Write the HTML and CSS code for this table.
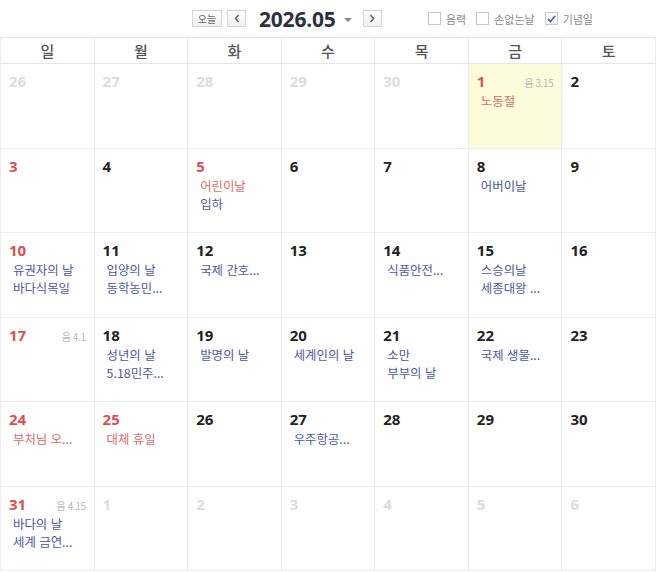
FILE: index.html
```html
<!DOCTYPE html>
<html lang="ko">
<head>
<meta charset="utf-8">
<title>2026.05</title>
<link rel="stylesheet" href="styles.css">
</head>
<body>
<div class="toolbar">
  <div class="nav">
    <span class="btn btn-today">오늘</span>
    <span class="btn btn-arrow"><svg width="6" height="9" viewBox="0 0 6 9"><path d="M4.5 1 L1.5 4.5 L4.5 8" fill="none" stroke="#666" stroke-width="1.6"/></svg></span>
    <span class="title">2026.05</span>
    <span class="caret"></span>
    <span class="btn btn-arrow btn-next"><svg width="6" height="9" viewBox="0 0 6 9"><path d="M1.5 1 L4.5 4.5 L1.5 8" fill="none" stroke="#666" stroke-width="1.6"/></svg></span>
  </div>
  <div class="opts">
    <label class="opt"><span class="box"></span>음력</label>
    <label class="opt"><span class="box"></span>손없는날</label>
    <label class="opt"><span class="box checked"><svg width="9" height="8" viewBox="0 0 9 8"><path d="M1 4 L3.5 6.5 L8 1" fill="none" stroke="#4a63b0" stroke-width="1.8"/></svg></span>기념일</label>
  </div>
</div>

<div class="cal">
  <div class="dow">일</div><div class="dow">월</div><div class="dow">화</div><div class="dow">수</div><div class="dow">목</div><div class="dow">금</div><div class="dow">토</div>

  <div class="cell"><div class="num other">26</div></div>
  <div class="cell"><div class="num other">27</div></div>
  <div class="cell"><div class="num other">28</div></div>
  <div class="cell"><div class="num other">29</div></div>
  <div class="cell"><div class="num other">30</div></div>
  <div class="cell today"><div class="head"><span class="num red">1</span><span class="lunar">음 3.15</span></div><div class="ev red">노동절</div></div>
  <div class="cell"><div class="num">2</div></div>

  <div class="cell"><div class="num red">3</div></div>
  <div class="cell"><div class="num">4</div></div>
  <div class="cell"><div class="num red">5</div><div class="ev red">어린이날</div><div class="ev">입하</div></div>
  <div class="cell"><div class="num">6</div></div>
  <div class="cell"><div class="num">7</div></div>
  <div class="cell"><div class="num">8</div><div class="ev">어버이날</div></div>
  <div class="cell"><div class="num">9</div></div>

  <div class="cell"><div class="num red">10</div><div class="ev">유권자의 날</div><div class="ev">바다식목일</div></div>
  <div class="cell"><div class="num">11</div><div class="ev">입양의 날</div><div class="ev">동학농민...</div></div>
  <div class="cell"><div class="num">12</div><div class="ev">국제 간호...</div></div>
  <div class="cell"><div class="num">13</div></div>
  <div class="cell"><div class="num">14</div><div class="ev">식품안전...</div></div>
  <div class="cell"><div class="num">15</div><div class="ev">스승의날</div><div class="ev">세종대왕 ...</div></div>
  <div class="cell"><div class="num">16</div></div>

  <div class="cell"><div class="head"><span class="num red">17</span><span class="lunar">음 4.1</span></div></div>
  <div class="cell"><div class="num">18</div><div class="ev">성년의 날</div><div class="ev">5.18민주...</div></div>
  <div class="cell"><div class="num">19</div><div class="ev">발명의 날</div></div>
  <div class="cell"><div class="num">20</div><div class="ev">세계인의 날</div></div>
  <div class="cell"><div class="num">21</div><div class="ev">소만</div><div class="ev">부부의 날</div></div>
  <div class="cell"><div class="num">22</div><div class="ev">국제 생물...</div></div>
  <div class="cell"><div class="num">23</div></div>

  <div class="cell"><div class="num red">24</div><div class="ev red">부처님 오...</div></div>
  <div class="cell"><div class="num red">25</div><div class="ev red">대체 휴일</div></div>
  <div class="cell"><div class="num">26</div></div>
  <div class="cell"><div class="num">27</div><div class="ev">우주항공...</div></div>
  <div class="cell"><div class="num">28</div></div>
  <div class="cell"><div class="num">29</div></div>
  <div class="cell"><div class="num">30</div></div>

  <div class="cell"><div class="head"><span class="num red">31</span><span class="lunar">음 4.15</span></div><div class="ev">바다의 날</div><div class="ev">세계 금연...</div></div>
  <div class="cell"><div class="num other">1</div></div>
  <div class="cell"><div class="num other">2</div></div>
  <div class="cell"><div class="num other">3</div></div>
  <div class="cell"><div class="num other">4</div></div>
  <div class="cell"><div class="num other">5</div></div>
  <div class="cell"><div class="num other">6</div></div>
</div>
</body>
</html>
```
FILE: styles.css
```css
html, body {
  margin: 0;
  padding: 0;
  background: #fff;
}
body {
  width: 656px;
  height: 572px;
  overflow: hidden;
  font-family: "Open Sans", "Noto Sans CJK KR", sans-serif;
  color: #222;
}
.toolbar {
  height: 37px;
  display: flex;
  align-items: center;
  box-sizing: border-box;
  padding-left: 192px;
  padding-right: 63px;
}
.nav {
  display: flex;
  align-items: center;
}
.btn {
  box-sizing: border-box;
  height: 17px;
  border: 1px solid #d4d4d4;
  background: linear-gradient(#ffffff, #f1f1f1);
  display: flex;
  align-items: center;
  justify-content: center;
  font-family: "Noto Sans CJK KR", sans-serif;
  font-size: 10px;
  color: #666;
}
.btn-today {
  width: 30px;
}
.btn-arrow {
  width: 19px;
  margin-left: 5px;
}
.btn-next {
  margin-left: 11px;
}
.title {
  margin-left: 13px;
  font-family: "Open Sans", sans-serif;
  font-weight: 700;
  font-size: 21px;
  line-height: 24px;
  color: #2d3040;
  letter-spacing: -0.2px;
}
.caret {
  margin-left: 8px;
  width: 0;
  height: 0;
  border-left: 4px solid transparent;
  border-right: 4px solid transparent;
  border-top: 4px solid #8a8a8a;
  margin-top: 2px;
}
.opts {
  margin-left: auto;
  display: flex;
  align-items: center;
  gap: 10px;
}
.opt {
  display: flex;
  align-items: center;
  font-family: "Noto Sans CJK KR", sans-serif;
  font-size: 11px;
  color: #888;
}
.box {
  box-sizing: border-box;
  width: 13px;
  height: 13px;
  border: 1px solid #c8c8c8;
  background: #fff;
  margin-right: 5px;
  display: flex;
  align-items: center;
  justify-content: center;
}
.cal {
  display: grid;
  grid-template-columns: repeat(7, 1fr);
  grid-template-rows: 26px repeat(6, 84.5px);
  border-top: 1px solid #e6e6e6;
  border-left: 1px solid #ededed;
  box-sizing: border-box;
  width: 656px;
}
.dow {
  border-right: 1px solid #ececec;
  border-bottom: 1px solid #e6e6e6;
  display: flex;
  align-items: center;
  justify-content: center;
  font-family: "Noto Sans CJK KR", sans-serif;
  font-size: 15px;
  font-weight: 500;
  color: #555;
}
.cell {
  border-right: 1px solid #ececec;
  border-bottom: 1px solid #ececec;
  padding: 7px 8px 0 8px;
  min-width: 0;
  overflow: hidden;
}
.today {
  background: #fcfcdd;
}
.head {
  display: flex;
  justify-content: space-between;
  align-items: baseline;
}
.num {
  font-family: "Open Sans", sans-serif;
  font-weight: 700;
  font-size: 15px;
  line-height: 20px;
  color: #222;
}
.num.red {
  color: #dc4f4f;
}
.num.other {
  color: #dcdcdc;
}
.lunar {
  font-family: "Noto Sans CJK KR", sans-serif;
  font-size: 10px;
  color: #b8b8b8;
  letter-spacing: -0.4px;
}
.ev {
  font-family: "Noto Sans CJK KR", sans-serif;
  font-size: 12.4px;
  line-height: 18px;
  color: #4a589f;
  padding-left: 4px;
  white-space: nowrap;
}
.num + .ev,
.head + .ev {
  margin-top: 1px;
}
.ev.red {
  color: #e06a6a;
}
```
